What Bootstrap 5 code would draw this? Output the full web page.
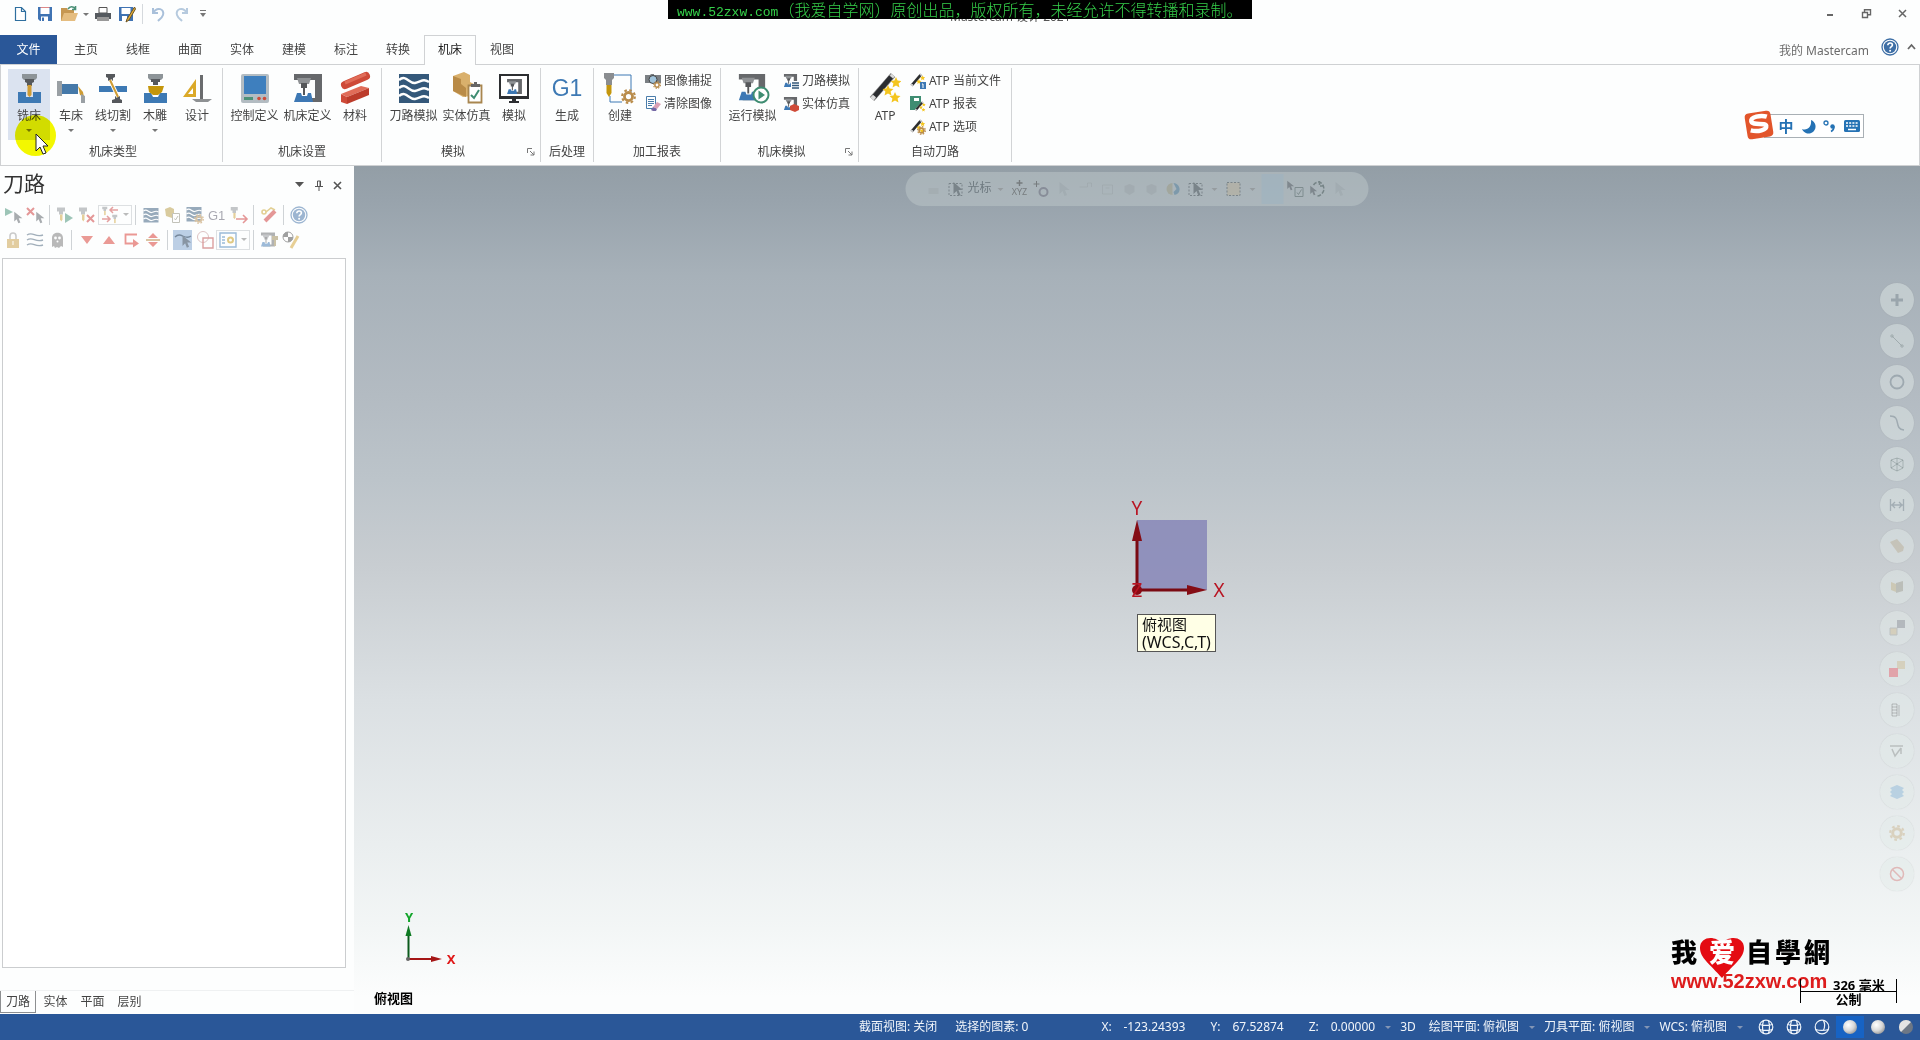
<!DOCTYPE html>
<html lang="zh-CN">
<head>
<meta charset="utf-8">
<meta name="viewport" content="width=device-width, initial-scale=1">
<title>Mastercam 设计 2021</title>
<link href="https://cdn.jsdelivr.net/npm/bootstrap@5.3.0/dist/css/bootstrap.min.css" rel="stylesheet">
<style>
body{font-family:"Noto Sans","Noto Sans CJK SC",sans-serif;font-size:12px;line-height:16px;color:#444;background:#fdfefe;height:100vh;overflow:hidden}
button{font:inherit;color:inherit;background:none;border:0;padding:0;line-height:inherit}
a{color:inherit;text-decoration:none}
svg{display:block;flex:none;overflow:visible}
.ic16{width:16px;height:16px}
.ic18{width:18px;height:18px}
.ic32{width:32px;height:32px}
.titlebar{height:35px}
.quick{height:28px;padding-left:9px}
.quick button{width:24px;height:20px;display:flex;align-items:center;justify-content:center}
.quick .tiny{width:10px}
.quick .vline{width:1px;height:20px;background:#d5d9dd;margin:0 3px}
.wctl button{width:36px;height:26px;display:flex;align-items:center;justify-content:center}
.apptitle{position:absolute;left:50%;top:9px;margin-left:-10px;color:#555}
.notice{position:absolute;left:50%;top:0;transform:translateX(-50%);width:584px;height:19px;background:#000;color:#35d04a;font-family:"Noto Sans CJK SC",sans-serif;font-size:16px;line-height:18px;white-space:nowrap;padding-left:9px;font-weight:300;z-index:3}
.notice a{font-family:"Liberation Mono",monospace;font-size:13px}
.tabs{height:29px;position:relative;z-index:1}
.tabs .filetab{width:57px;background:#2a5798;color:#fff;height:29px;line-height:28px;margin-right:3px}
.tabs .tab{width:52px;height:30px;line-height:28px;text-align:center;border:1px solid transparent;border-bottom:0;color:#444}
.tabs .tab.active{background:#fdfefe;border-color:#d0d2d4;color:#222}
.mycam{color:#6b6b6b}
.ribbon{border:1px solid #cfd1d3;height:102px}
.grp{border-right:1px solid #d2d4d6;margin:3px 0 4px;padding:1px 5px 0;height:94px}
.grp:first-child{padding:1px 4px 0 7px}
.grp .items{height:72px}
.grplabel{height:22px;line-height:22px;text-align:center}
.big{width:42px;height:71px;display:flex;flex-direction:column;align-items:center;padding-top:3px!important;white-space:nowrap}
.big.wide{width:53px}
.big .cap{margin-top:4px;line-height:16px}
.big.hot{background:#dbe3f0}
.smalls{padding:0 3px 0 4px}
.grp:last-child .smalls{padding-right:5px}
.smalls button{height:23px;display:flex;align-items:center;gap:3px;white-space:nowrap}
.caret{width:0;height:0;border:3px solid transparent;border-top-color:#777;border-bottom:0;flex:none}
.big .caret{margin-top:5px}
.panel{flex:0 0 354px;background:#fdfefe}
.panel h1{font-size:21px;line-height:30px;font-weight:400;color:#333;margin:0}
.phead{height:36px;padding:2px 7px 0 3px}
.phead button{width:19px;height:18px;display:flex;align-items:center;justify-content:center}
.tools{height:25px;padding-left:2px}
.tools button{width:22px;height:20px;display:flex;align-items:center;justify-content:center}
.tools button svg{opacity:.5}
.tools .vline{width:1px;height:20px;background:#cfd3d6;margin:0 4px 0 3px}
.tools .combo{width:34px;border:1px solid #dde0e2;gap:4px}
.tools .combo .caret{opacity:.5}
.tools .sel{background:#bccfe5;width:19px;margin:0 2px 0 1px}
.tree{border:1px solid #cbcdcf;margin:6px 8px 0 2px;background:#fff}
.ptabs{height:24px;margin-top:22px;border-top:1px solid #eff1f2}
.ptabs button{width:37px;height:22px;line-height:18px;color:#444}
.ptabs .active{border:1px solid #8d8f91;border-top:0;width:36px;margin-right:1px}
.canvas3d{position:relative;overflow:hidden;background:linear-gradient(#939ea6 0,#98a3ac 4%,#a7b1b9 13%,#b3bbc2 27%,#bcc4ca 37%,#c8cdd1 47%,#dbe0e3 63%,#eaeeef 80%,#f3f6f6 90%,#fcfdfd 98%)}
.float{position:absolute;left:50%;top:6px;transform:translateX(-50%);width:463px;height:34px;border-radius:17px;background:rgba(190,200,202,.5);padding-left:18px;gap:2px;color:#6f7a80}
.float button{width:20px;height:24px;display:flex;align-items:center;justify-content:center;white-space:nowrap}
.float .txt{width:24px;padding-bottom:3px}
.float .drop{width:14px}
.float .dim{opacity:.18}
.float .caret{opacity:.4}
.float svg{opacity:.5}
.float .lit{background:rgba(150,178,198,.35);height:30px;width:22px}
.side{position:absolute;right:6px;top:117px;gap:7px}
.side button{width:34px;height:34px;border-radius:50%;background:rgba(226,234,233,.45);display:flex;align-items:center;justify-content:center;box-shadow:0 0 1px rgba(120,120,120,.3)}
.side svg{opacity:.28}
.gnomon{position:absolute;left:50%;top:50%;margin:-90px 0 0 -10px}
.tip{position:absolute;left:50%;top:50%;margin-top:24px;border:1px solid #555;background:#ffffe6;color:#111;font-size:15px;line-height:18px;padding:0 4px;white-space:nowrap}
.tip span{font-size:16px}
.axes{position:absolute;left:44px;bottom:44px}
.vname{position:absolute;left:20px;bottom:8px;font-weight:700;font-size:13px;color:#000}
.brand{position:absolute;right:89px;bottom:22px;width:160px;height:56px}
.scale{position:absolute;right:23px;bottom:9px;width:97px;color:#000;font-size:13px;font-weight:700}
.scale .top{padding-left:33px;border-bottom:1px solid #000;height:15px;line-height:16px;white-space:nowrap}
.scale .bot{height:13px;line-height:15px;text-align:center}
.scale::before,.scale::after{content:"";position:absolute;top:2px;width:1px;height:24px;background:#000}
.scale::before{left:0}.scale::after{right:0}
.ime{position:absolute;top:114px;right:56px;width:100px;height:24px;border:1px solid #a9b0b5;background:#fff;padding-left:10px;color:#2572b4}
.ime button{width:22px;height:22px;display:flex;align-items:center;justify-content:center}
.ime .sogou{position:absolute;left:-22px;top:-6px;width:32px;height:32px}
.ime .zh{font-weight:700;font-size:15px}
.pointer{position:absolute;left:15px;top:115px;z-index:4;pointer-events:none}
.halo{position:absolute;left:15px;top:115px;width:41px;height:41px;border-radius:50%;background:#f5f800;mix-blend-mode:multiply;z-index:3;pointer-events:none}
.status{height:26px;background:#2a5798;color:#f1f5fa;white-space:nowrap}
.status .caret{border-top-color:#8396b5;margin:0 9px 0 10px}
.status .lab{width:22px}
.status .seg{margin-left:25px}
.status .far{margin-left:73px}
.status .near{margin-left:18px}
.status .mode{margin-right:13px}
.status button.shade{width:28px;height:22px;display:flex;align-items:center;justify-content:center}
.status button.on{background:#1763c4}
</style>
</head>
<body class="d-flex flex-column">
<svg width="0" height="0" class="position-absolute" aria-hidden="true">
<defs>
<radialGradient id="ball" cx=".38" cy=".35" r=".7"><stop offset="0" stop-color="#fff"/><stop offset=".6" stop-color="#d8d8d8"/><stop offset="1" stop-color="#999"/></radialGradient>
<symbol id="waves" viewBox="0 0 32 32"><path fill="#34587a" d="M1 2h30v29H1z"/><path d="M1 8c7-6 10 4 16 3s8-5 14-1M1 16c7-6 10 4 16 3s8-5 14-1M1 24c7-6 10 4 16 3s8-5 14-1" fill="none" stroke="#fff" stroke-width="2.4"/></symbol>
<symbol id="robot" viewBox="0 0 32 32"><path fill="#66686b" d="M2 2h28v28H6v-4h17V8H2z"/><path fill="#8f9295" d="M5 6h14l-2 6H7z"/><path fill="#55575a" d="M9 11h6v5h-2v7h-2v-7H9z"/><path fill="#3d78b4" d="M5 21h4l1 3h5l1-3h3l2 9H2z"/></symbol>
<symbol id="gear" viewBox="0 0 16 16"><circle cx="8" cy="8" r="4.3" fill="none" stroke="#b98c4b" stroke-width="3"/><circle cx="8" cy="8" r="6.8" fill="none" stroke="#b98c4b" stroke-width="2.2" stroke-dasharray="2.7 2.64"/></symbol>
<symbol id="wand" viewBox="0 0 32 32"><path d="M3 27 24 3" stroke="#888" stroke-width="6"/><path d="M5 25 22 5" stroke="#2b2d30" stroke-width="5"/><path d="M3 27l2.500-3M22.500 5 24 3.200" stroke="#ddd" stroke-width="4"/><path id="st" fill="#f4c51f" d="M27 5l1.600 3.600 3.900.4-2.900 2.600.9 4-3.500-2.100-3.500 2.100.9-4-2.900-2.600 3.900-.4z"/><use href="#st" x="-8" y="8"/><use href="#st" x="-1" y="15"/></symbol>
<symbol id="cursor" viewBox="0 0 16 16"><path fill="#555c63" d="M4 1v12l3-3 2 5 2.500-1-2-5H14z"/></symbol>
<symbol id="tool" viewBox="0 0 16 16"><path fill="#8a8f93" d="M2 1h8v4H8v3H4V5H2z"/><path fill="#cfa33a" d="M5 8h2.500v5l-1.200 2L5 13z"/></symbol>
<symbol id="pick" viewBox="0 0 16 16"><path fill="none" stroke="#4b555b" stroke-dasharray="2 1.500" d="M1.500 2.500h13v12h-13z"/><path fill="#4b555b" d="M6 1v12l3-3 2 5 2-1-2-5h4z"/></symbol>
<symbol id="help" viewBox="0 0 18 18"><circle cx="9" cy="9" r="8" fill="#fff" stroke="#3e6fa6" stroke-width="1.300"/><circle cx="9" cy="9" r="6.200" fill="#3e6fa6"/><path d="M6.800 7.200c0-3 4.600-2.700 4.600-.2 0 1.700-2.300 1.600-2.300 3.500" fill="none" stroke="#fff" stroke-width="1.600"/><circle cx="9.100" cy="12.700" r="1" fill="#fff"/></symbol>
<symbol id="globe" viewBox="0 0 16 16"><g fill="none" stroke="#edf3fa" stroke-width="1.200"><circle cx="8" cy="8" r="6.800"/><path d="M1.500 5.500c4 1.200 9 1.200 13 0M1.500 10.500c4 1.200 9 1.200 13 0M5.500 1.600c-1.200 4-1.200 9 0 13M10.500 1.600c1.200 4 1.200 9 0 13"/></g></symbol>
<symbol id="launch" viewBox="0 0 8 8"><path d="M.5 5V.5H5M3 3l4 4M7 3.500V7H3.500" fill="none" stroke="#777"/></symbol>
</defs></svg>

<header class="titlebar position-relative d-flex align-items-start justify-content-between">
 <div class="quick d-flex align-items-center">
  <button aria-label="新建"><svg class="ic16" viewBox="0 0 16 16"><path d="M2.500 1.500h6l4 4v9h-10zM8.500 1.500v4h4" fill="#fff" stroke="#2f6f9f" stroke-width="1.200"/></svg></button>
  <button aria-label="保存"><svg class="ic16" viewBox="0 0 16 16"><path fill="#3f73b3" d="M1 1h14v14H3l-2-2z"/><path fill="#fff" d="M3.500 2h9v6h-9zM4 10.500h7V15H4z"/><path fill="#3f73b3" d="M5 11.500h2V15H5z"/><path fill="#d88" d="M3.500 1h9v1h-9z"/></svg></button>
  <button aria-label="打开"><svg class="ic18" viewBox="0 0 18 18"><path fill="#c69752" d="M1 3h6l1 2h6v11H1z"/><path fill="#e5bd80" d="M4 8h14l-3 8H1z"/><path d="M8 4c2-3 5-3 7-.5M15.500 1v3.500H12" fill="none" stroke="#4c9178" stroke-width="1.600"/></svg></button>
  <button class="tiny" aria-label="打开选项"><span class="caret"></span></button>
  <button aria-label="打印"><svg class="ic16" viewBox="0 0 16 16"><path d="M4 1.500h8V7H4z" fill="#fff" stroke="#555"/><path fill="#555a5f" d="M0 7h16v6H0z"/><path fill="#999" d="M2 11h12v4H2z"/></svg></button>
  <button aria-label="另存为"><svg class="ic18" viewBox="0 0 18 18"><path fill="#3f73b3" d="M1 2h14v14H1z"/><path fill="#fff" d="M3.500 3h9v6h-9zM4 11h5v5H4z"/><path d="M16.500 2 9 14l-1 3 3-2 6.500-11z" fill="#e3ae37" stroke="#6d5525"/></svg></button>
  <span class="vline"></span>
  <button aria-label="撤销"><svg class="ic16" viewBox="0 0 16 16"><path d="M3 2v5h5M3 7c4-7 12-4 10 2-1 3-3 4-5 6" fill="none" stroke="#a9c0da" stroke-width="2"/></svg></button>
  <button aria-label="重做"><svg class="ic16" viewBox="0 0 16 16"><path d="M13 2v5H8M13 7C9 0 1 3 3 9c1 3 3 4 5 6" fill="none" stroke="#b6cade" stroke-width="2"/></svg></button>
  <button class="tiny ms-1" aria-label="自定义"><svg width="6" height="8" viewBox="0 0 6 8"><path fill="#777" d="M0 0h6v1H0zM0 3h6L3 7z"/></svg></button>
 </div>
 <div class="apptitle">Mastercam 设计 2021</div>
 <div class="notice"><a href="#">www.52zxw.com</a>（我爱自学网）原创出品，版权所有，未经允许不得转播和录制。</div>
 <div class="wctl d-flex">
  <button aria-label="最小化"><svg width="10" height="10"><path fill="#666" d="M2 6h6v2H2z"/></svg></button>
  <button aria-label="还原"><svg width="9" height="9"><path d="M.5 3.500h5v5h-5zM2.500 3V.8h6v5H6" fill="none" stroke="#666" stroke-width="1.400"/></svg></button>
  <button aria-label="关闭"><svg width="9" height="9"><path d="m1 1 7 7M8 1 1 8" stroke="#666" stroke-width="1.500"/></svg></button>
 </div>
</header>

<nav class="tabs d-flex align-items-start" aria-label="功能区">
 <button class="filetab">文件</button>
 <a class="tab" href="#">主页</a><a class="tab" href="#">线框</a><a class="tab" href="#">曲面</a><a class="tab" href="#">实体</a><a class="tab" href="#">建模</a><a class="tab" href="#">标注</a><a class="tab" href="#">转换</a><a class="tab active" href="#">机床</a><a class="tab" href="#">视图</a>
 <div class="ms-auto d-flex align-items-center">
  <a class="mycam pe-2 me-1 pt-2" href="#">我的 Mastercam</a>
  <button class="me-2" aria-label="帮助"><svg class="ic18"><use href="#help"/></svg></button>
  <button class="me-1" aria-label="折叠功能区"><svg width="9" height="8"><path d="M1 6l3.500-4L8 6" fill="none" stroke="#666" stroke-width="1.800"/></svg></button>
 </div>
</nav>

<section class="ribbon d-flex" aria-label="机床">
 <div class="grp"><div class="items d-flex">
  <button class="big hot"><svg class="ic32" viewBox="0 0 32 32"><path fill="#8d9498" d="M9 2h15v4l-2 2H11L9 6z"/><path fill="#56595d" d="M12 7h9v3l-2 1v3h-5v-3l-2-1z"/><path fill="#3d79b4" d="M5 20h8v5h7v-5h8v11H5z"/><path fill="#cf9c33" d="M14.500 13h4v10l-2 2-2-2z"/></svg><span class="cap">铣床</span><span class="caret"></span></button>
  <button class="big"><svg class="ic32" viewBox="0 0 32 32"><path fill="#9aa0a4" d="M2 9h5v15H2z"/><path fill="#4579a9" d="M7 12h16v10H7z"/><path fill="#cf9c33" d="m23 14 5 6 1 5-4-2z"/><path fill="#9aa0a4" d="M26 22l4 2v7h-4z"/></svg><span class="cap">车床</span><span class="caret"></span></button>
  <button class="big"><svg class="ic32" viewBox="0 0 32 32"><path fill="#55585c" d="M9 2h9v3l-2 1v3h-5V6L9 5zM15 31h10v-3l-2-1v-3h-5v3l-3 1z"/><path fill="#3d79b4" d="M2 14h28v6H2z"/><path d="M13 8l8 17" stroke="#fff" stroke-width="4"/><path d="M13 8l8 17" stroke="#cf9c33" stroke-width="2"/></svg><span class="cap">线切割</span><span class="caret"></span></button>
  <button class="big"><svg class="ic32" viewBox="0 0 32 32"><path fill="#8d9498" d="M9 2h15v4l-2 2H11L9 6z"/><path fill="#56595d" d="M12 7h9v3h-2v3h-5v-3h-2z"/><path fill="#3d79b4" d="M5 21h7l2 4h5l2-4h7v10H5z"/><path fill="#c4960c" d="M9 14h16l-2 6-4 3h-5l-4-3z"/></svg><span class="cap">木雕</span><span class="caret"></span></button>
  <button class="big"><svg class="ic32" viewBox="0 0 32 32"><path fill="#dba928" fill-rule="evenodd" d="M15 7v18H2zM12 16v6H7z"/><path fill="#6a6c6e" d="M19 3h3v25h-3z"/><path fill="#8e9193" d="M11 27h20l-4 3H15z"/></svg><span class="cap">设计</span></button>
 </div><div class="grplabel">机床类型</div></div>
 <div class="grp"><div class="items d-flex">
  <button class="big wide"><svg class="ic32" viewBox="0 0 32 32"><rect x="2" y="2" width="28" height="29" rx="2" fill="#b3bcc2"/><path fill="#3e7fbe" d="M5 4h22v18H5z"/><path fill="#4c9178" d="M5 25h9v3H5z"/><circle cx="20" cy="26.500" r="1.800" fill="#cf4b38"/><circle cx="25.500" cy="26.500" r="1.800" fill="#cf4b38"/></svg><span class="cap">控制定义</span></button>
  <button class="big wide"><svg class="ic32"><use href="#robot"/></svg><span class="cap">机床定义</span></button>
  <button class="big"><svg class="ic32" viewBox="0 0 32 32"><path d="m6 13 21-9" stroke="#ce4a38" stroke-width="8" stroke-linecap="round"/><path d="m6 11 21-9" stroke="#e06c58" stroke-width="3"/><path fill="#ce4a38" d="m2 22 6 3v7l-6-2z"/><path fill="#e06c58" d="m2 22 20-8 8 2-22 9z"/><path fill="#bc3c2b" d="m8 25 22-9v7L8 32z"/></svg><span class="cap">材料</span></button>
 </div><div class="grplabel">机床设置</div></div>
 <div class="grp"><div class="items d-flex">
  <button class="big wide"><svg class="ic32"><use href="#waves"/></svg><span class="cap">刀路模拟</span></button>
  <button class="big wide"><svg class="ic32" viewBox="0 0 32 32"><path fill="#d9b06c" d="m2 4 11-4 6 3v7l6 3-5 11-8 1-10-6z"/><path fill="#b98b47" d="M2 4l8 3v5l5 4v9L2 19z"/><path d="M17.500 13.500h13v17h-13z" fill="#fff" stroke="#a8864f" stroke-width="1.800"/><path fill="#666" d="M20 12h3v-2h3v2h3v3h-9z"/><path d="m20 23 3 3 5-8" fill="none" stroke="#3f8d72" stroke-width="2"/></svg><span class="cap">实体仿真</span></button>
  <button class="big"><svg class="ic32" viewBox="0 0 32 32"><path fill="#2c2e31" d="M1 2h30v25H18v2h3v2H11v-2h3v-2H1z"/><path fill="#fff" d="M3 4h26v20H3z"/><use href="#robot" x="8" y="6" width="17" height="17"/></svg><span class="cap">模拟</span></button>
 </div><div class="d-flex align-items-center"><div class="grplabel flex-grow-1">模拟</div><button class="ps-2" aria-label="模拟选项"><svg width="8" height="8"><use href="#launch"/></svg></button></div></div>
 <div class="grp"><div class="items d-flex">
  <button class="big"><svg class="ic32" viewBox="0 0 32 32"><text x="16" y="24" text-anchor="middle" font-family="Liberation Sans" font-size="23" fill="#3d79b4">G1</text></svg><span class="cap">生成</span></button>
 </div><div class="grplabel">后处理</div></div>
 <div class="grp"><div class="items d-flex">
  <button class="big"><svg class="ic32" viewBox="0 0 32 32"><path d="M9 3h18v17M6 24v6h12" fill="none" stroke="#3d79b4"/><path fill="#8a8d90" d="M0 1h10v5L8 8v5H2V8L0 6z"/><path fill="#c4960c" d="M2.500 13h5v8L5 25l-2.500-4z"/><use href="#gear" x="17" y="17" width="15" height="15"/></svg><span class="cap">创建</span></button>
  <div class="smalls"><button><svg class="ic16" viewBox="0 0 16 16"><path fill="#7b8084" d="M0 2h5l1-1h3v1h7v8H0z"/><circle cx="8" cy="6.500" r="4" fill="#9fc3db" stroke="#444"/><use href="#gear" x="8" y="8" width="8" height="8"/></svg>图像捕捉</button>
  <button><svg class="ic16" viewBox="0 0 16 16"><path d="M1.500.5h9v12h-9zM3 3.500h6M3 5.500h6M3 7.500h6M3 9.500h4" fill="none" stroke="#4a7dab"/><path fill="#dba1b5" d="m12 6 4 2-4 5-4-2z"/><path fill="#7569a5" d="m8 11 4 2-1 2H8l-2-1z"/></svg>清除图像</button></div>
 </div><div class="grplabel">加工报表</div></div>
 <div class="grp"><div class="items d-flex">
  <button class="big wide"><svg class="ic32" viewBox="0 0 32 32"><use href="#robot" width="30" height="30"/><circle cx="24" cy="23" r="7.500" fill="#fff" stroke="#3f8d72" stroke-width="2"/><path fill="#3f8d72" d="M21.500 18.500v9l6.500-4.500z"/></svg><span class="cap">运行模拟</span></button>
  <div class="smalls"><button><svg class="ic16" viewBox="0 0 16 16"><use href="#robot" width="15" height="15"/><path fill="#fff" d="M8 8h8v8H8z"/><path d="M9 10h7M9 12.500h7M9 15h7" stroke="#34587a" stroke-width="1.400"/></svg>刀路模拟</button>
  <button><svg class="ic16" viewBox="0 0 16 16"><use href="#robot" width="15" height="15"/><path fill="#cf4b38" d="m7 10 4-2 5 2v4l-4 2-5-2z"/></svg>实体仿真</button></div>
 </div><div class="d-flex align-items-center"><div class="grplabel flex-grow-1">机床模拟</div><button class="ps-2" aria-label="机床模拟选项"><svg width="8" height="8"><use href="#launch"/></svg></button></div></div>
 <div class="grp"><div class="items d-flex">
  <button class="big"><svg class="ic32"><use href="#wand"/></svg><span class="cap">ATP</span></button>
  <div class="smalls"><button><svg class="ic16" viewBox="0 0 16 16"><use href="#wand" width="15" height="15"/><path fill="#3d79b4" d="M10 9h6v7h-6z"/><path d="M12 11h1v4" fill="none" stroke="#fff"/></svg>ATP 当前文件</button>
  <button><svg class="ic16" viewBox="0 0 16 16"><path fill="#3f8d72" d="M0 0h11v9l-6 5H0z"/><path fill="#fff" d="M4 2h5v3H4z"/><use href="#wand" x="4" y="5" width="12" height="11"/></svg>ATP 报表</button>
  <button><svg class="ic16" viewBox="0 0 16 16"><use href="#wand" width="15" height="15"/><use href="#gear" x="7" y="7" width="9" height="9"/></svg>ATP 选项</button></div>
 </div><div class="grplabel">自动刀路</div></div>
</section>
<div class="ime d-flex">
 <button class="sogou" aria-label="输入法"><svg width="32" height="32"><g transform="rotate(-9 16 16)"><rect x="3" y="3" width="26" height="26" rx="4" fill="#e2552b"/><path d="M25 9c-6-3-16-2-16 2 0 5 14 3 14 7 0 4-9 5-16 2" fill="none" stroke="#fff" stroke-width="4.500"/></g></svg></button>
 <button class="zh">中</button>
 <button aria-label="半角"><svg class="ic16"><path fill="#2572b4" d="M11 2a7 7 0 1 1-9 9c5 2 10-2 9-9z"/></svg></button>
 <button aria-label="中文标点"><svg class="ic16"><circle cx="4" cy="5" r="2" fill="none" stroke="#2572b4" stroke-width="1.300"/><circle cx="10.500" cy="8.500" r="2.200" fill="#2572b4"/><path d="M12 8.500c0 3-1 4-3 5" fill="none" stroke="#2572b4" stroke-width="1.600"/></svg></button>
 <button aria-label="软键盘"><svg class="ic16"><rect y="2" width="16" height="12" rx="1.500" fill="#2572b4"/><path d="M2 5h12M2 8h12" stroke="#fff" stroke-width="1.700" stroke-dasharray="2 1.200"/><path d="M4 11.500h8" stroke="#fff" stroke-width="1.500"/></svg></button>
</div>

<main class="d-flex flex-grow-1">
 <aside class="panel d-flex flex-column">
  <div class="phead d-flex align-items-start"><h1 class="flex-grow-1">刀路</h1>
   <div class="d-flex mt-2"><button aria-label="菜单"><svg width="9" height="6"><path fill="#555" d="M0 0h9L4.500 5z"/></svg></button><button aria-label="固定"><svg width="8" height="11"><path d="M2.500 6V1h3v5M5 1v5M0 6.500h8M4 7v4" fill="none" stroke="#555"/></svg></button><button aria-label="关闭面板"><svg width="9" height="9"><path d="m1 1 7 7M8 1 1 8" stroke="#555" stroke-width="1.600"/></svg></button></div></div>
  <div class="tools d-flex align-items-center">
   <button aria-label="全选操作"><svg class="ic18" viewBox="0 0 18 18"><path fill="#3f8d72" d="m1 2 8 4-8 4z"/><use href="#cursor" x="7" y="5" width="13" height="13"/></svg></button>
   <button aria-label="取消全选"><svg class="ic18" viewBox="0 0 18 18"><path d="m1 2 7 7m0-7-7 7" stroke="#c33" stroke-width="2"/><use href="#cursor" x="7" y="5" width="13" height="13"/></svg></button><span class="vline"></span>
   <button aria-label="重新生成"><svg class="ic18" viewBox="0 0 18 18"><use href="#tool" x="-1" width="16" height="17"/><path fill="#3f8d72" d="m9 7 8 5-8 5z"/></svg></button>
   <button aria-label="取消生成"><svg class="ic18" viewBox="0 0 18 18"><use href="#tool" x="-1" width="16" height="17"/><path d="m9 9 7 7m0-7-7 7" stroke="#c33" stroke-width="2"/></svg></button>
   <button class="combo" aria-label="选择刀路"><svg class="ic18" viewBox="0 0 18 18"><use href="#tool" x="-1" width="12" height="10"/><use href="#tool" x="9" y="8" width="12" height="10"/><path d="M17 4H9m3-3L9 4l3 3M1 13h8M6 10l3 3-3 3" fill="none" stroke="#c44" stroke-width="1.500"/></svg><span class="caret"></span></button><span class="vline"></span>
   <button aria-label="模拟"><svg class="ic16"><use href="#waves"/></svg></button>
   <button aria-label="验证"><svg class="ic18" viewBox="0 0 18 18"><path fill="#b69a40" d="m1 3 5-2 4 2v4l-2 5-6-2z"/><path d="M8.500 7.500h7v9h-7zm2 5 1 1.500 2.500-4" fill="#fff" stroke="#887"/></svg></button>
   <button aria-label="模拟选项"><svg class="ic18" viewBox="0 0 18 18"><use href="#waves" width="16" height="16"/><use href="#gear" x="8" y="8" width="10" height="10"/></svg></button>
   <button aria-label="后处理"><svg class="ic18" viewBox="0 0 18 18"><text y="14" font-size="13" font-family="Liberation Sans" fill="#556">G1</text></svg></button>
   <button aria-label="进给"><svg class="ic18" viewBox="0 0 18 18"><use href="#tool" x="-1" width="14" height="14"/><path d="M6 13h11m-4-4 4 4-4 4" fill="none" stroke="#c33" stroke-width="1.600"/></svg></button><span class="vline"></span>
   <button aria-label="毛坯"><svg class="ic18" viewBox="0 0 18 18"><path d="M5 15 15 5" stroke="#c33" stroke-width="4"/><circle cx="4" cy="6" r="2" fill="none" stroke="#c9a22b" stroke-width="1.600"/><path d="M6 6l5-4 4 2" stroke="#c9a22b" stroke-width="1.600" fill="none"/></svg></button><span class="vline"></span>
   <button aria-label="帮助"><svg class="ic18"><use href="#help"/></svg></button>
  </div>
  <div class="tools d-flex align-items-center">
   <button aria-label="锁定"><svg class="ic16"><path d="M5 8V4c0-4 6-4 6 0v4" fill="none" stroke="#999" stroke-width="1.600"/><path fill="#c99e45" d="M2 7h12v9H2z"/><path fill="#fff" d="M7.500 9h1v4h-1z"/></svg></button>
   <button aria-label="显示刀路"><svg class="ic18"><path d="M1 4c6-4 8 3 16 0M1 9c6-4 8 3 16 0M1 14c6-4 8 3 16 0" fill="none" stroke="#456078" stroke-width="1.400"/></svg></button>
   <button aria-label="隐藏"><svg class="ic16"><path fill="#777" d="M3 15V6c0-7 11-7 11 0v9l-2-1-2 2-2-1-2 1-1-2z"/><circle cx="6.500" cy="6" r="1.400" fill="#fff"/><circle cx="10.500" cy="6" r="1.400" fill="#fff"/><circle cx="8.500" cy="9.500" r="1" fill="#fff"/></svg></button><span class="vline"></span>
   <button aria-label="下移"><svg class="ic16"><path fill="#d8352c" d="M2 4h12l-6 8z"/></svg></button>
   <button aria-label="上移"><svg class="ic16"><path fill="#d8352c" d="M2 12h12L8 4z"/></svg></button>
   <button aria-label="插入位置"><svg class="ic16"><path d="M14 2.500H2.500v9H12" fill="none" stroke="#d8352c" stroke-width="1.800"/><path fill="#d8352c" d="m10 7 6 4.500-6 4z"/></svg></button>
   <button aria-label="滚动箭头"><svg class="ic16"><path fill="#d8352c" d="M3 6h10L8 1zM3 10h10l-5 5z"/><path fill="#b98c4b" d="M1 7h14v2H1z"/></svg></button><span class="vline"></span>
   <button class="sel" aria-label="显示选中"><svg class="ic18" viewBox="0 0 18 18"><path d="M1 6c6-6 10 4 16-1" fill="none" stroke="#345" stroke-width="1.300"/><use href="#cursor" x="5" y="3" width="14" height="15"/></svg></button>
   <button aria-label="显示几何"><svg class="ic18" viewBox="0 0 18 18"><circle cx="7" cy="6" r="5.500" fill="none" stroke="#b88"/><path fill="none" stroke="#b44" stroke-width="1.400" d="M7 7h10v10H7z"/></svg></button>
   <button class="combo" aria-label="显示选项"><svg class="ic18" viewBox="0 0 18 18"><path fill="none" stroke="#3d79b4" stroke-width="1.400" d="M1 2h16v14H1zM3 6h3M3 9h3M3 12h3"/><circle cx="11.500" cy="9" r="2.500" fill="none" stroke="#c4960c" stroke-width="2"/></svg><span class="caret"></span></button><span class="vline"></span>
   <button aria-label="机床模拟"><svg class="ic18" viewBox="0 0 18 18"><use href="#robot" width="16" height="17"/><path fill="#998650" d="M12 5h6v4h-2v6h-2V9h-2z"/></svg></button>
   <button aria-label="编辑"><svg class="ic18" viewBox="0 0 18 18"><circle cx="6" cy="6" r="5" fill="#fff" stroke="#444"/><path fill="#444" d="M6 1v5H1c0-3 2-5 5-5zM6 11V6h5c0 3-2 5-5 5z"/><path d="m9 17 7-12" stroke="#d2a12e" stroke-width="3"/></svg></button>
  </div>
  <div class="tree flex-grow-1"></div>
  <div class="ptabs d-flex"><button class="active">刀路</button><button>实体</button><button>平面</button><button>层别</button></div>
 </aside>

 <section class="canvas3d flex-grow-1" aria-label="绘图区">
  <div class="float d-flex align-items-center">
   <button class="dim" aria-label="锁"><svg class="ic16"><path fill="#666" d="M3 7h10v6H3z"/></svg></button>
   <button aria-label="光标选择"><svg class="ic16"><use href="#pick"/></svg></button><button class="txt">光标</button><button class="drop" aria-label="光标选项"><span class="caret"></span></button>
   <button aria-label="坐标"><svg class="ic18" viewBox="0 0 18 18"><path d="M9 0v6M6 3h6" stroke="#444" stroke-width="1.400"/><text x="9" y="15" text-anchor="middle" font-size="9" fill="#444">XYZ</text></svg></button>
   <button aria-label="选择设置"><svg class="ic16"><path d="M3 0v6M0 3h6" stroke="#444"/><circle cx="10" cy="11" r="4" fill="none" stroke="#667" stroke-width="2"/></svg></button>
   <button class="dim" aria-label="选择"><svg class="ic16"><use href="#cursor"/></svg></button>
   <button class="dim" aria-label="边界"><svg class="ic16"><path d="M2 6h8V2h4v4" fill="none" stroke="#555"/></svg></button>
   <button class="dim" aria-label="面"><svg class="ic16"><path fill="none" stroke="#555" d="M3 4h10v9H3zM6 7h4"/></svg></button>
   <button class="dim" aria-label="实体"><svg class="ic16"><path fill="#555" d="m3 5 5-2 5 2v6l-5 3-5-3z"/></svg></button>
   <button class="dim" aria-label="主体"><svg class="ic16"><path fill="#555" d="m3 5 5-2 5 2v6l-5 3-5-3z"/></svg></button>
   <button aria-label="反选"><svg class="ic16"><path fill="#9b9a82" d="M7 2a6 6 0 0 0 0 12z"/><path fill="#527f9e" d="M8 2c8 1 8 11 1 12l-1-3 3-3z"/></svg></button>
   <button aria-label="窗选"><svg class="ic16"><use href="#pick"/></svg></button><button class="drop" aria-label="窗选选项"><span class="caret"></span></button>
   <button aria-label="范围"><svg class="ic16"><path fill="#b9b09a" stroke="#4b555b" stroke-dasharray="2 1.500" d="M1.500 1.500h13v13h-13z"/></svg></button><button class="drop" aria-label="范围选项"><span class="caret"></span></button>
   <button class="lit" aria-label="过滤"></button>
   <button aria-label="验证选择"><svg class="ic18" viewBox="0 0 18 18"><use href="#cursor" x="-2" y="0" width="11" height="11"/><path d="M8.500 7.500h8v9h-8zm2 5 1.500 2 3-5" fill="none" stroke="#566"/></svg></button>
   <button aria-label="上次选择"><svg class="ic18" viewBox="0 0 18 18"><use href="#cursor" x="-1" y="5" width="11" height="11"/><path d="M5 5c4-6 12-2 10 6-1 3-4 5-6 5M11 1v5h5" fill="none" stroke="#455" stroke-dasharray="4 1.500" stroke-width="1.500"/></svg></button>
   <button class="dim" aria-label="取消选择"><svg class="ic16"><use href="#cursor"/></svg></button>
  </div>

  <svg class="gnomon" width="110" height="104" viewBox="0 0 110 104"><path fill="#8787b8" fill-opacity=".86" d="M10 20h70v70H10z"/><path fill="none" stroke="#7a0a12" stroke-width="3" d="M10 38v52h50"/><path fill="#850d15" d="M10 20l5 21H5zM80 90 60 85v10z"/><circle cx="10" cy="90" r="5" fill="#8b0a14"/><g fill="#b81422" font-family="Noto Sans" font-size="19" text-anchor="middle"><text x="10" y="15">Y</text><text x="92" y="97">X</text><text x="10" y="97">Z</text></g></svg>
  <div class="tip">俯视图<br><span>(WCS,C,T)</span></div>

  <svg class="axes" width="70" height="60" viewBox="0 0 70 60"><path d="M10.500 49V24" stroke="#0b5a1c" stroke-width="2"/><path fill="#0d7a22" d="M10.500 15l3 11h-6z"/><path d="M10 49h24" stroke="#a51616" stroke-width="2"/><path fill="#a51616" d="m44 49-11-3v6z"/><circle cx="10" cy="49" r="2" fill="#666"/><g font-family="Noto Sans" font-weight="700" font-size="13" text-anchor="middle"><text x="11" y="12" fill="#12a52a">Y</text><text x="53" y="54" fill="#e01818">X</text></g></svg>
  <div class="vname">俯视图</div>

  <svg class="brand" viewBox="0 0 160 56"><path fill="#e40b12" d="M51 42C39 28 29 22 29 12 29 0 45-1 51 8c6-9 22-8 22 4 0 10-10 16-22 30z"/><g font-family="Noto Sans CJK TC" font-weight="900" font-size="26" text-anchor="middle"><text x="13" y="26">我</text><text x="51" y="26" fill="#fff">爱</text><text x="88" y="26">自</text><text x="117" y="26">學</text><text x="146" y="26">網</text></g><text x="0" y="52" font-family="Liberation Sans" font-size="20" font-weight="700" fill="#dd1c1c">www.52zxw.com</text></svg>
  <div class="scale"><div class="top">326 毫米</div><div class="bot">公制</div></div>

  <div class="side d-flex flex-column">
   <button aria-label="点"><svg class="ic16"><path d="M8 2v12M2 8h12" stroke="#345" stroke-width="3"/></svg></button>
   <button aria-label="线"><svg class="ic16"><path d="m3 3 10 10M1 3h4M3 1v4M11 13h4M13 11v4" stroke="#455"/></svg></button>
   <button aria-label="圆"><svg class="ic16"><circle cx="8" cy="8" r="6.500" fill="none" stroke="#345" stroke-width="1.800"/></svg></button>
   <button aria-label="曲线"><svg class="ic16"><path d="M1 1c12 0 3 13 14 14" fill="none" stroke="#345" stroke-width="1.500"/></svg></button>
   <button aria-label="实体线框"><svg class="ic16"><path d="m2 4 6-2 6 2v8l-6 3-6-3zm0 0 12 8M14 4 2 12M8 2v13" fill="none" stroke="#455"/></svg></button>
   <button aria-label="标注"><svg class="ic16"><path d="M1.500 2v12M14.500 2v12M2 8h12M6 5 3 8l3 3M10 5l3 3-3 3" fill="none" stroke="#345" stroke-width="1.300"/></svg></button>
   <button aria-label="曲面"><svg class="ic16"><path fill="#a58d62" d="m1 4 7-3 7 8-1 4-5 2z"/></svg></button>
   <button aria-label="实体"><svg class="ic16"><path fill="#b5964f" d="m2 3 5 2v8l-5-2z"/><path fill="#7a745f" d="m7 4 7-2v10l-7 2z"/></svg></button>
   <button aria-label="平面选择"><svg class="ic16"><path fill="#556" d="M8 0h8v8H8z"/><path fill="#c9a45e" stroke="#777" d="M1 8h7v7H1z"/></svg></button>
   <button aria-label="红色选择"><svg class="ic16"><path fill="#c9a45e" d="M8 0h8v8H8z"/><path fill="#f00019" d="M0 7h9v9H0z"/></svg></button>
   <button aria-label="标尺"><svg class="ic16"><path d="M3 2h5v12H3zM3 5h5M3 8h5M3 11h5M10 3v11" fill="none" stroke="#444"/></svg></button>
   <button aria-label="筛选"><svg class="ic16"><path d="M1 3h13M3 6l3 7 6-8M12 5v6" fill="none" stroke="#555" stroke-width="1.500"/></svg></button>
   <button aria-label="图层"><svg class="ic16"><path fill="#4b8ecb" d="M1 4 8 1l7 3-2 2 2 2-2 2 2 2-7 3-7-3 2-2-2-2 2-2z"/></svg></button>
   <button aria-label="设置"><svg class="ic16"><use href="#gear"/></svg></button>
   <button aria-label="禁用"><svg class="ic16"><circle cx="8" cy="8" r="6.500" fill="none" stroke="#c33" stroke-width="1.500"/><path d="m3.500 3.500 9 9" stroke="#c33" stroke-width="1.500"/></svg></button>
  </div>
 </section>
</main>

<footer class="status d-flex align-items-center justify-content-end">
 <span>截面视图: 关闭</span><span class="near">选择的图素: 0</span>
 <span class="far d-flex"><span class="lab">X:</span><span>-123.24393</span></span>
 <span class="seg d-flex"><span class="lab">Y:</span><span>67.52874</span></span>
 <span class="seg d-flex"><span class="lab">Z:</span><span>0.00000</span></span>
 <span class="caret"></span><span class="mode">3D</span>
 <span>绘图平面: 俯视图</span><span class="caret"></span>
 <span>刀具平面: 俯视图</span><span class="caret"></span>
 <span>WCS: 俯视图</span><span class="caret"></span>
 <button class="shade" aria-label="线框"><svg class="ic16"><use href="#globe"/></svg></button>
 <button class="shade" aria-label="隐藏线"><svg class="ic16"><use href="#globe"/></svg></button>
 <button class="shade" aria-label="移除隐藏线"><svg class="ic16"><g fill="none" stroke="#edf3fa" stroke-width="1.200"><circle cx="8" cy="8" r="6.800"/><path d="M1.500 10.500c4 1.200 9 1.200 13 0M9.500 1.600c1.600 3 1.600 6 0 9.500"/></g></svg></button>
 <button class="shade on" aria-label="着色"><svg class="ic16"><circle cx="8" cy="8" r="7" fill="url(#ball)"/></svg></button>
 <button class="shade" aria-label="边框着色"><svg class="ic16"><circle cx="8" cy="8" r="7" fill="url(#ball)"/></svg></button>
 <button class="shade" aria-label="半透明"><svg class="ic16"><circle cx="8" cy="8" r="7" fill="#6d7785"/><path fill="#e4e4e4" d="M13 3A7 7 0 1 0 3 13z"/></svg></button>
</footer>

<div class="halo"></div>
<svg class="pointer" width="40" height="42"><path d="M21 19v17l4-4 3 7 3-1-3-7h5z" fill="#fff" stroke="#222"/></svg>
<script src="https://cdn.jsdelivr.net/npm/bootstrap@5.3.0/dist/js/bootstrap.bundle.min.js"></script>
</body>
</html>
